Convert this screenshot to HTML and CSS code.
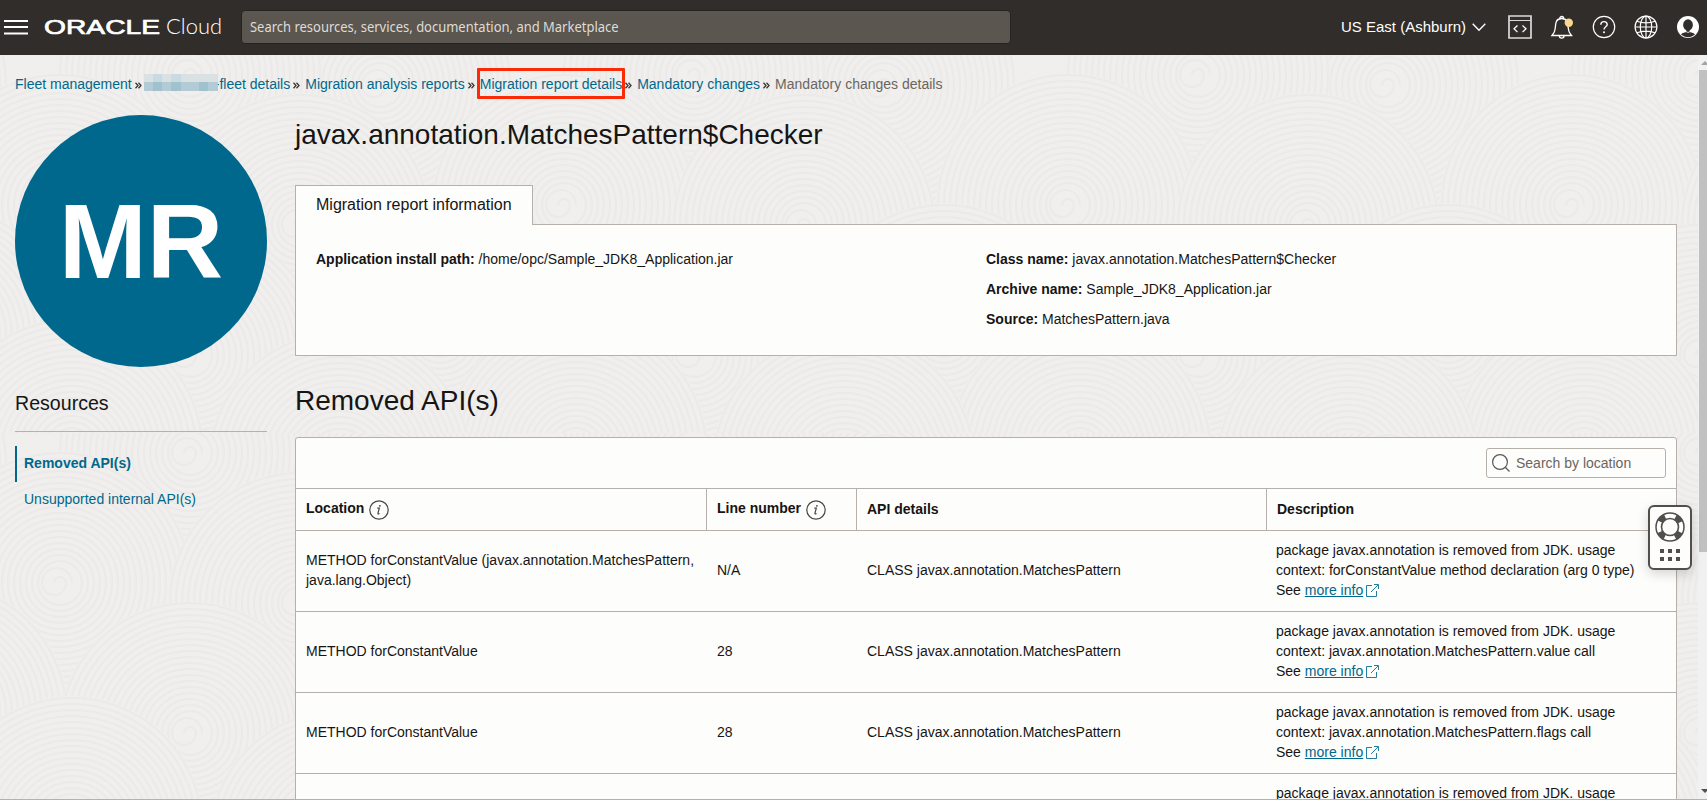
FILE: index.html
```html
<!DOCTYPE html>
<html lang="en">
<head>
<meta charset="utf-8">
<title>Mandatory changes details</title>
<link rel="stylesheet" href="styles.css">
</head>
<body>
<svg class="defs" width="0" height="0" aria-hidden="true">
  <symbol id="sep" viewBox="0 0 7 7"><path d="M.5.8 3 3.500.5 6.200M3.500.8 6 3.500 3.500 6.200" fill="none" stroke="#3a3632" stroke-width="1.300"/></symbol>
  <symbol id="info" viewBox="0 0 20 20"><circle cx="10" cy="10" r="9.200" fill="none" stroke="#4a4642" stroke-width="1.200"/><path d="M8.300 8.200h2L9 13.200q-.2 1.200 1.500.2" fill="none" stroke="#4a4642" stroke-width="1.200"/><circle cx="10.900" cy="5.800" r=".9" fill="#4a4642"/></symbol>
  <symbol id="ext" viewBox="0 0 13 13"><path d="M6 1.500H.5v11h10V7M5 8l7-7M8 .5h4.500V5" fill="none" stroke="#227e9e"/></symbol>
</svg>

<header class="topbar">
  <svg class="menu" width="24" height="16" viewBox="0 0 24 16"><path d="M0 2h24M0 8h24M0 14.500h24" stroke="#fff" stroke-width="2"/></svg>
  <svg class="brand" width="180" height="32" viewBox="0 0 180 32">
    <text x="-1" y="23" class="brand-oracle" textLength="116" lengthAdjust="spacingAndGlyphs">ORACLE</text>
    <text x="121" y="23" class="brand-cloud" textLength="56" lengthAdjust="spacingAndGlyphs">Cloud</text>
  </svg>
  <div class="global-search"><span>Search resources, services, documentation, and Marketplace</span></div>
  <div class="region">US East (Ashburn)
    <svg width="14" height="9" viewBox="0 0 14 9"><path d="M.7.8 7 7.300 13.300.8" fill="none" stroke="#fff" stroke-width="1.400"/></svg>
  </div>
  <nav class="tools">
    <svg width="24" height="24" viewBox="0 0 24 24"><path d="M1 1h22v22H1z" fill="none" stroke="#dcdad8" stroke-width="1.700"/><path d="M1 5.500h22" stroke="#dcdad8"/><path d="M9.500 10.500 6 13.800l3.500 3.300M14.500 10.500l3.500 3.300-3.500 3.300" fill="none" stroke="#fff" stroke-width="1.300"/></svg>
    <svg width="24" height="24" viewBox="0 0 24 24"><path d="M2 20.500h19.500C19.500 18 18.500 17 18.300 13.500 18 8 17.500 3.500 11.700 3.500S5.500 8 5.200 13.500C5 17 4 18 2 20.500zM9.700 3.500a2 2 0 0 1 4 0M9.300 20.700a2.400 2.400 0 0 0 4.800 0" fill="none" stroke="#fff" stroke-width="1.300"/><circle cx="18.800" cy="7.700" r="4.200" fill="#f9d78f"/></svg>
    <svg width="24" height="24" viewBox="0 0 24 24"><circle cx="12" cy="12" r="10.700" fill="none" stroke="#fff" stroke-width="1.200"/><path d="M8.800 9.700c0-4 6.400-4 6.400-.3 0 2.400-3.200 2.300-3.200 5.200" fill="none" stroke="#fff" stroke-width="1.400"/><circle cx="12" cy="17.200" r="1" fill="#fff"/></svg>
    <svg width="24" height="24" viewBox="0 0 24 24"><g fill="none" stroke="#fff" stroke-width="1.200"><circle cx="12" cy="12" r="10.900"/><ellipse cx="12" cy="12" rx="5.700" ry="10.900"/><path d="M1 12h22M12 1v22M3 6.300c5 2.200 13 2.200 18 0M3 17.700c5-2.200 13-2.200 18 0"/></g></svg>
    <svg width="24" height="24" viewBox="0 0 24 24"><circle cx="12" cy="12" r="11" fill="#fff"/><ellipse cx="12" cy="10" rx="4.900" ry="5.800" fill="#312d2a"/><path d="M10.300 15h3.400v1.800c2.500.4 4.500 1.500 5.300 2.800-4 3.400-10 3.400-14 0 .8-1.300 2.800-2.400 5.300-2.800z" fill="#312d2a"/><path d="M4.600 19.200c.8-1.200 3-2.300 5.600-2.500l1.800.8 1.800-.8c2.600.2 4.800 1.300 5.600 2.500" fill="none" stroke="#fff" stroke-width=".8"/></svg>
  </nav>
</header>

<div class="viewport">
  <svg class="texture" width="100%" height="100%" aria-hidden="true">
    <defs>
      <g id="swirl">
        <circle r="132" fill="#f0efed" stroke="none"/>
        <path d="M-6 0a6 6 0 0 1 12 0a12 12 0 0 1-24 0a15 15 0 0 1 30 0"/>
        <circle r="22"/><circle r="28"/><circle r="34"/><circle r="40"/><circle r="46"/><circle r="52"/><circle r="58"/><circle r="64"/><circle r="70"/><circle r="76"/><circle r="82"/><circle r="88"/><circle r="94"/><circle r="100"/><circle r="106"/><circle r="112"/><circle r="118"/><circle r="124"/><circle r="130"/>
      </g>
      <pattern id="waves" width="504" height="378" patternUnits="userSpaceOnUse">
        <g fill="none" stroke="#ebeae8" stroke-width="2">
          <use href="#swirl" x="380" y="30"/><use href="#swirl" x="-124" y="30"/>
          <use href="#swirl" x="190" y="20"/><use href="#swirl" x="190" y="398"/>
          <use href="#swirl" x="60" y="150"/><use href="#swirl" x="564" y="150"/>
          <use href="#swirl" x="300" y="170"/>
          <use href="#swirl" x="440" y="280"/><use href="#swirl" x="-64" y="280"/>
          <use href="#swirl" x="190" y="300"/>
          <use href="#swirl" x="72" y="395"/><use href="#swirl" x="576" y="395"/>
          <use href="#swirl" x="340" y="408"/>
        </g>
      </pattern>
    </defs>
    <rect width="100%" height="100%" fill="url(#waves)"/>
  </svg>

  <div class="page">
    <nav class="crumbs">
      <a class="crumb">Fleet management</a><svg class="sep"><use href="#sep"/></svg>
      <span class="masked"><i></i><i></i><i></i><i></i><i></i><i></i><i></i><i></i><i></i><i></i><i></i><i></i><i></i><i></i><i></i><i></i></span><a class="crumb tucked">-fleet details</a><svg class="sep wide"><use href="#sep"/></svg>
      <a class="crumb">Migration analysis reports</a><svg class="sep wide"><use href="#sep"/></svg>
      <a class="crumb marked">Migration report details</a><svg class="sep wide"><use href="#sep"/></svg>
      <a class="crumb">Mandatory changes</a><svg class="sep wide"><use href="#sep"/></svg>
      <span class="crumb current">Mandatory changes details</span>
    </nav>

    <div class="columns">
      <aside class="side">
        <div class="avatar">MR</div>
        <h2 class="side-title">Resources</h2>
        <a class="side-link active">Removed API(s)</a>
        <a class="side-link">Unsupported internal API(s)</a>
      </aside>

      <main class="main">
        <h1 class="title">javax.annotation.MatchesPattern$Checker</h1>
        <div class="tab">Migration report information</div>
        <section class="panel">
          <div class="facts"><p><b>Application install path:</b> /home/opc/Sample_JDK8_Application.jar</p></div>
          <div class="facts">
            <p><b>Class name:</b> javax.annotation.MatchesPattern$Checker</p>
            <p><b>Archive name:</b> Sample_JDK8_Application.jar</p>
            <p><b>Source:</b> MatchesPattern.java</p>
          </div>
        </section>
        <h1 class="title second">Removed API(s)</h1>
        <section class="table">
          <div class="toolbar">
            <div class="filter"><svg width="18" height="18" viewBox="0 0 18 18"><circle cx="8" cy="8" r="7.400" fill="none" stroke="#5c5751" stroke-width="1.200"/><path d="M13 13l4.500 4.500" stroke="#5c5751" stroke-width="1.200"/></svg>Search by location</div>
          </div>
          <div class="row head">
            <div class="cell with-info">Location <svg class="info"><use href="#info"/></svg></div>
            <div class="cell with-info">Line number <svg class="info"><use href="#info"/></svg></div>
            <div class="cell">API details</div>
            <div class="cell">Description</div>
          </div>
          <div class="row">
            <div class="cell">METHOD forConstantValue (javax.annotation.MatchesPattern, java.lang.Object)</div>
            <div class="cell">N/A</div>
            <div class="cell">CLASS javax.annotation.MatchesPattern</div>
            <div class="cell">package javax.annotation is removed from JDK. usage<br>context: forConstantValue method declaration (arg 0 type)<br>See <a class="more">more info</a><svg class="ext"><use href="#ext"/></svg></div>
          </div>
          <div class="row">
            <div class="cell">METHOD forConstantValue</div>
            <div class="cell">28</div>
            <div class="cell">CLASS javax.annotation.MatchesPattern</div>
            <div class="cell">package javax.annotation is removed from JDK. usage<br>context: javax.annotation.MatchesPattern.value call<br>See <a class="more">more info</a><svg class="ext"><use href="#ext"/></svg></div>
          </div>
          <div class="row">
            <div class="cell">METHOD forConstantValue</div>
            <div class="cell">28</div>
            <div class="cell">CLASS javax.annotation.MatchesPattern</div>
            <div class="cell">package javax.annotation is removed from JDK. usage<br>context: javax.annotation.MatchesPattern.flags call<br>See <a class="more">more info</a><svg class="ext"><use href="#ext"/></svg></div>
          </div>
          <div class="row last">
            <div class="cell"></div>
            <div class="cell"></div>
            <div class="cell"></div>
            <div class="cell">package javax.annotation is removed from JDK. usage</div>
          </div>
        </section>
      </main>
    </div>
  </div>

  <div class="scrollbar">
    <svg class="arrow" width="10" height="15" viewBox="0 0 10 15"><path d="M3 10l4-4 4 4z" fill="#a3a3a3"/></svg>
    <div class="thumb"></div>
    <svg class="arrow" width="10" height="15" viewBox="0 0 10 15"><path d="M3 5h8l-4 4z" fill="#505050"/></svg>
  </div>

  <div class="help">
    <svg width="30" height="30" viewBox="0 0 30 30"><circle cx="15" cy="15" r="14" fill="#fff" stroke="#524e49" stroke-width="1.500"/><circle cx="15" cy="15" r="11.300" fill="none" stroke="#524e49" stroke-width="6" stroke-dasharray="7 10.750" stroke-dashoffset="-5.380"/><circle cx="15" cy="15" r="8.500" fill="#fdfdfc" stroke="#524e49" stroke-width="1.600"/></svg>
    <svg width="20" height="12" viewBox="0 0 20 12"><path d="M0 0h4v4H0zM8 0h4v4H8zM16 0h4v4h-4zM0 8h4v4H0zM8 8h4v4H8zM16 8h4v4h-4z" fill="#524e49"/></svg>
  </div>
</div>
</body>
</html>
```
FILE: styles.css
```css
* { box-sizing: border-box; }
html, body { height: 100%; margin: 0; overflow: hidden; }
body {
  display: flex;
  flex-direction: column;
  font: 14px/20px "Liberation Sans", Arial, sans-serif;
  color: #161513;
  background: #f0efed;
  border-bottom: 1px solid #b5b2ae;
}
.defs { position: absolute; }
svg { display: block; flex: none; }
h1, h2, p { margin: 0; font-weight: 400; }

.topbar {
  display: flex;
  align-items: center;
  flex: none;
  height: 55px;
  padding: 0 7px 1px 4px;
  background: #312d2a;
  color: #fff;
}
.brand { margin-left: 17px; overflow: visible; }
.brand-oracle { font: 400 21px "Liberation Sans", sans-serif; fill: #fff; stroke: #fff; stroke-width: .7px; }
.brand-cloud { font: 300 22px Lato, sans-serif; fill: #fff; }
.global-search {
  width: 770px;
  height: 34px;
  margin-left: 16px;
  padding: 0 8px;
  border: 1px solid #26221f;
  border-radius: 4px;
  background: #5b564f;
  color: #dfdcd8;
  font: 14px/31px "Noto Sans", sans-serif;
  white-space: nowrap;
}
.global-search span { display: inline-block; transform: scaleX(.927); transform-origin: left; }
.region {
  display: flex;
  align-items: center;
  gap: 6px;
  margin-left: auto;
  font-size: 15px;
}
.tools { display: flex; gap: 18px; margin-left: 22px; }

.viewport { position: relative; display: flex; flex: 1; min-height: 0; overflow: hidden; }
.texture { position: absolute; inset: 0; }
.page { position: relative; flex: 1; padding: 19px 20px 0 15px; }

.crumbs { display: flex; align-items: center; height: 20px; white-space: nowrap; }
.crumb { color: #00688c; }
.current { color: #6b6560; }
.sep { width: 7px; height: 7px; margin: 2px 2px 0 3px; }
.sep.wide { margin-right: 5px; }
.tucked { margin-left: -3px; }
.marked { position: relative; }
.marked::after {
  content: "";
  position: absolute;
  inset: -6px -3px -5px -3px;
  border: 3px solid #fb2b08;
  border-radius: 1px;
}
.masked {
  position: relative;
  z-index: 1;
  display: grid;
  grid-template-columns: repeat(8, 1fr);
  grid-template-rows: 8px 9px;
  width: 74px;
  height: 17px;
  margin-top: -3px;
}
.masked i { background: #d9e1e2; }
.masked i:nth-child(2), .masked i:nth-child(4) { background: #c9dbe0; }
.masked i:nth-child(n+9) { background: #b2cbd4; }
.masked i:nth-child(10), .masked i:nth-child(12), .masked i:nth-child(15) { background: #a0c2ce; }

.columns { display: grid; grid-template-columns: 252px 1383px; column-gap: 28px; }
.side { padding-top: 21px; }
.avatar {
  width: 252px;
  height: 252px;
  border-radius: 50%;
  background: #00688c;
  color: #fff;
  font-size: 105.800px;
  font-weight: 700;
  line-height: 253px;
  text-align: center;
}
.side-title {
  height: 65px;
  margin-bottom: 14px;
  padding-top: 24px;
  border-bottom: 1px solid #b5b2ae;
  font-size: 19.600px;
  line-height: 24px;
}
.side-link {
  display: block;
  height: 36px;
  padding: 7px 0 0 7px;
  border-left: 2px solid transparent;
  color: #00688c;
}
.side-link.active { border-color: #00688c; font-weight: 700; }

.main { padding-top: 23px; }
.title { font-size: 28px; line-height: 36px; }
.tab {
  position: relative;
  width: 238px;
  height: 40px;
  margin: 32px 0 -1px;
  padding: 9px 20px;
  border: 1px solid #b5b0a9;
  border-bottom: 0;
  background: #fdfdfc;
  font-size: 16px;
}
.panel {
  display: grid;
  grid-template-columns: 1fr 1fr;
  width: 1382px;
  height: 132px;
  padding: 19px 20px;
  border: 1px solid #b5b0a9;
  background: #fdfdfc;
}
.facts p { line-height: 30px; }
.second { margin-top: 27px; }

.table {
  width: 1382px;
  margin-top: 18px;
  border: 1px solid #b5b0a9;
  border-radius: 3px 3px 0 0;
  background: #fdfdfc;
}
.toolbar { display: flex; justify-content: flex-end; height: 50px; padding: 10px; }
.filter {
  display: flex;
  align-items: center;
  gap: 6px;
  width: 180px;
  height: 30px;
  padding-left: 5px;
  border: 1px solid #b5b0a9;
  border-radius: 3px;
  color: #6b6560;
}
.row {
  display: grid;
  grid-template-columns: 411px 150px 410px 409px;
  align-items: center;
  height: 81px;
  padding-bottom: 2px;
  border-top: 1px solid #b5b0a9;
}
.cell { padding: 0 10px; }
.row:not(.head) .cell:last-child { padding-left: 9px; }
.head { height: 42px; padding: 0; font-weight: 700; align-items: stretch; }
.head .cell { border-right: 1px solid #b5b0a9; line-height: 40px; }
.head .cell:last-child { border-right: 0; }
.head .with-info { display: flex; gap: 5px; line-height: 38px; }
.info { width: 20px; height: 20px; margin-top: 11px; }
.last { align-items: start; padding-top: 9px; }
.more { color: #00688c; text-decoration: underline; }
.ext { display: inline-block; width: 13px; height: 13px; margin-left: 3px; vertical-align: -2px; }

.scrollbar { position: relative; display: flex; flex-direction: column; width: 9px; background: #f1f1f1; }
.thumb { flex: none; height: 482px; margin: 0 0 auto 1px; background: #c1c1c1; }

.help {
  position: absolute;
  left: 1648px;
  top: 450px;
  display: flex;
  flex-direction: column;
  align-items: center;
  gap: 7px;
  width: 44px;
  height: 65px;
  padding-top: 5px;
  border: 2px solid #524e49;
  border-radius: 6px;
  background: #fdfdfc;
  box-shadow: 0 4px 12px rgba(0, 0, 0, .16);
}
```
